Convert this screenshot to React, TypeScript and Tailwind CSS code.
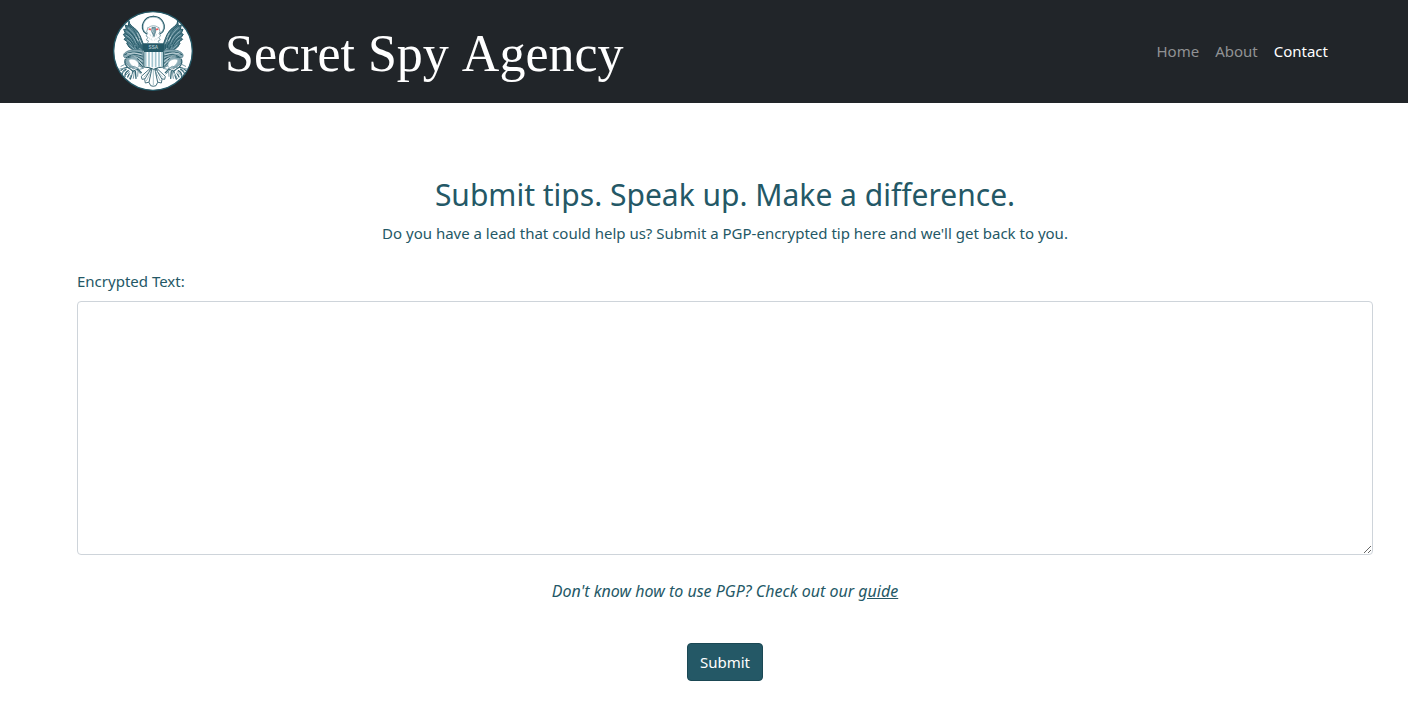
function HalfEagle() {
  return (
    <g fill="none" strokeLinecap="round" strokeLinejoin="round">
      {/* wing */}
      <path
        d="M78 64C79 74 86 78 94 84C108 95 113 110 120 130V152C110 158 92 153 78 141L71 130L74 126L63 118L68 113L61 103L67 100L62 88L70 88L67 75L75 78Z"
        fill="#4b7a88"
        stroke="#245866"
        strokeWidth="3"
      />
      <path
        d="M76 84C88 93 98 106 104 122M71 94C84 102 94 116 100 130M70 106C82 112 91 124 97 138M73 120C83 125 88 134 97 145M85 84C99 95 106 109 112 125M80 135L94 148"
        stroke="#a9c4cd"
        strokeWidth="2"
      />
      <path
        d="M79 77C94 88 104 106 109 126M73 89C88 99 97 113 102 129M69 101C82 108 90 121 96 135M72 114C81 119 88 130 93 141M105 130Q111 136 108 144M114 126V148M99 139Q105 146 103 152"
        stroke="#245866"
        strokeWidth="3"
      />
      <path d="M103 99L110 113M99 112L107 124M110 119L116 132M110 145L114 149" stroke="#d5e2e6" strokeWidth="2" />
      {/* flank and leg */}
      <path
        d="M119 151C98 147 78 148 65 159C58 166 62 176 72 174L66 188L77 198L92 207L108 198L121 204V165Z"
        fill="#8aabb5"
        stroke="#47717e"
        strokeWidth="2"
        strokeDasharray="7 3"
      />
      <path
        d="M65 164Q85 151 116 159M70 173Q91 157 118 168M76 172Q99 164 119 178M103 176L119 190M106 188L119 199"
        stroke="#245866"
        strokeWidth="3"
      />
      <path d="M73 161Q93 154 115 164M84 168Q104 167 116 184M108 182L118 196" stroke="#e3ecef" strokeWidth="2" />
      <path
        d="M77 181C82 174 99 177 105 187C109 193 108 201 102 205C93 203 80 195 77 181Z"
        fill="#fff"
        stroke="#94b1b9"
        strokeWidth="2"
      />
      {/* branch, talons and arrows */}
      <path
        d="M67 178Q62 190 73 201L90 214L104 207M90 214L82 237M97 212L99 235M104 207L115 218M72 202Q61 203 54 211M69 208Q58 213 57 224M76 212Q65 218 66 230M80 219L74 231"
        stroke="#346674"
        strokeWidth="4"
      />
      <path
        d="M50 207L64 205M57 218L68 211M65 229L80 214M79 236L88 219M91 235L94 216M104 229L105 214M113 222L101 209M64 194L54 199M79 203L94 199L109 208L121 205"
        stroke="#779ba6"
        strokeWidth="3"
      />
      <path d="M74 208L83 211L78 221M94 207L102 215M84 217L88 225" stroke="#fff" strokeWidth="2" />
      {/* neck feathers */}
      <path
        d="M135 82L131 95L134 100L129 108L135 112L130 120L137 123L134 128"
        stroke="#527f8c"
        strokeWidth="2"
      />
      <path d="M141 103L143 108M138 113L141 118M145 116L147 121M148 107L149 112" stroke="#c3d4d9" strokeWidth="2" />
      {/* halo */}
      <path d="M130 101C117 94 115 78 122 66C128 54 138 49 151 49" stroke="#245866" strokeWidth="4" />
      <path d="M128 99C116 88 119 69 130 59Q139 51 151 51" stroke="#8baeb7" strokeWidth="2" />
    </g>
  );
}

function AgencySeal() {
  return (
    <svg viewBox="30 33 240 240" className="size-20 shrink-0" role="img" aria-label="Secret Spy Agency seal">
      <circle cx="150" cy="153" r="118" fill="#fff" stroke="#245866" strokeWidth="4" />
      <HalfEagle />
      <g transform="translate(302 0) scale(-1 1)">
        <HalfEagle />
      </g>
      {/* head */}
      <path d="M136 83Q151 71 167 83" fill="none" stroke="#6f98a3" strokeWidth="2" />
      <path d="M147 82H157L158 95L153 110L146 95Z" fill="#7fa3ad" stroke="#47717e" strokeWidth="2" />
      <path d="M150 87L149 95L152 98" fill="none" stroke="#dbe6e9" strokeWidth="2" />
      <path d="M137 87L144 89M159 89L166 87" stroke="#ed5a5a" strokeWidth="5" />
      {/* tail */}
      <g fill="#fff" stroke="#47717e" strokeWidth="3" strokeLinejoin="round">
        <path d="M145 202L115 229L117 238L129 236Z" />
        <path d="M158 202L187 229L185 238L173 236Z" />
        <path d="M147 202L125 238L127 249L140 246Z" />
        <path d="M156 202L177 238L175 249L162 246Z" />
        <path d="M147 204L138 247L143 257L151 259L159 257L164 247L155 204Z" />
      </g>
      <path
        d="M151 209V256M146 212L130 243M156 212L172 243M142 211L122 232M160 211L180 232"
        fill="none"
        stroke="#7fa2ac"
        strokeWidth="2"
      />
      {/* shield */}
      <path d="M123 154H181V201Q166 201 152 208Q138 201 123 201Z" fill="#fff" stroke="#245866" strokeWidth="3" />
      <path d="M128 155V199M138 155V200M148 155V202M158 155V202M168 155V200M177 155V199" stroke="#a4c6d0" strokeWidth="5" />
      <path d="M119 130H184V149L180 156H124L119 149Z" fill="#245866" />
      <text
        x="151"
        y="147"
        textAnchor="middle"
        fill="#a9c3cb"
        className="font-['Liberation_Sans'] text-[14px] font-bold"
      >
        SSA
      </text>
    </svg>
  );
}

export default function App() {
  return (
    <div className="min-h-screen bg-white font-['Noto_Sans',sans-serif] text-base leading-6 text-[#245866]">
      <header className="flex items-center justify-between bg-[#212529] pt-[11px] pr-20 pb-3 pl-[113px]">
        <a href="#home" className="flex items-center gap-8 text-white">
          <AgencySeal />
          <span className="pt-1.5 font-['Liberation_Serif',serif] text-[52px] leading-[72px] [font-kerning:none]">
            Secret Spy Agency
          </span>
        </a>
        <nav aria-label="Main" className="flex gap-4 text-[15px]">
          <a href="#home" className="text-[#909294]">Home</a>
          <a href="#about" className="text-[#909294]">About</a>
          <a href="#contact" aria-current="page" className="text-white">Contact</a>
        </nav>
      </header>
      <main className="pt-[72px] pr-[35px] pb-11 pl-[77px]">
        <h1 className="text-center text-[30px] leading-10">Submit tips. Speak up. Make a difference.</h1>
        <p className="mt-1.5 text-center text-[15px]">
          Do you have a lead that could help us? Submit a PGP-encrypted tip here and we'll get back to you.
        </p>
        <form className="mt-6" onSubmit={(event) => event.preventDefault()}>
          <label htmlFor="message" className="block text-[15px]">Encrypted Text:</label>
          <textarea
            id="message"
            name="message"
            className="mt-2 block h-[254px] w-full resize-y rounded border border-[#ced4da] bg-white px-3 py-1.5 outline-none focus:border-[#245866]"
          />
          <p className="mt-6 text-center text-base italic">
            Don't know how to use PGP? Check out our{" "}
            <a href="#guide" className="underline">guide</a>
          </p>
          <div className="mt-10 flex justify-center">
            <button
              type="submit"
              className="cursor-pointer rounded border border-[#1b4854] bg-[#245866] px-3 py-1.5 text-[15px] text-white"
            >
              Submit
            </button>
          </div>
        </form>
      </main>
    </div>
  );
}
